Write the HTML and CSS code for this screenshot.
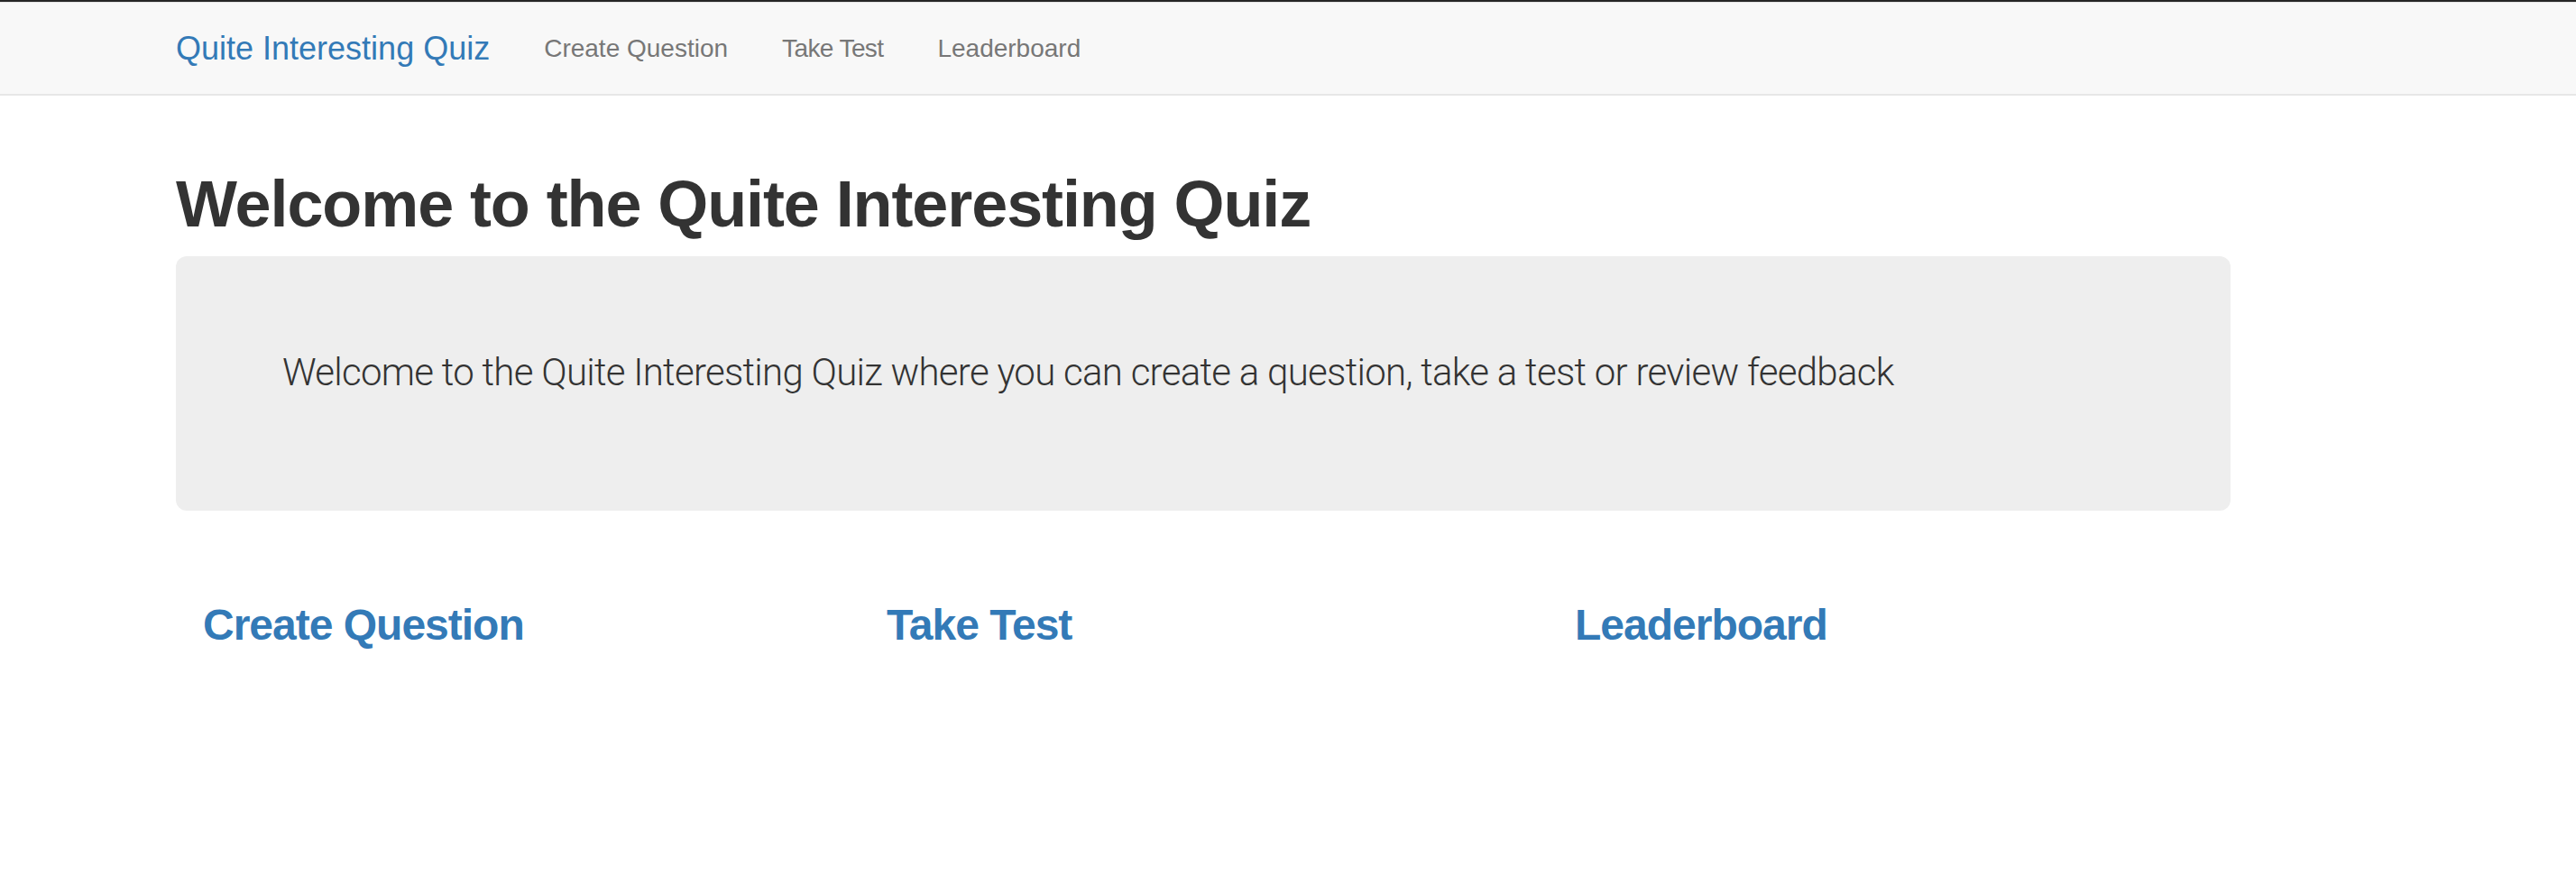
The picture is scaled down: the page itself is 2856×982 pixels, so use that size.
FILE: index.html
```html
<!DOCTYPE html>
<html lang="en">
<head>
<meta charset="utf-8">
<title>Quite Interesting Quiz</title>
<link rel="stylesheet" href="styles.css">
</head>
<body>
<div class="topline"></div>
<nav class="navbar">
  <div class="container nav-inner">
    <a class="brand" href="#">Quite Interesting Quiz</a>
    <ul class="nav-links">
      <li><a href="#">Create Question</a></li>
      <li><a href="#">Take Test</a></li>
      <li><a href="#">Leaderboard</a></li>
    </ul>
  </div>
</nav>
<main class="container">
  <h1 class="title">Welcome to the Quite Interesting Quiz</h1>
  <section class="jumbotron">
    <p class="lead">Welcome to the Quite Interesting Quiz where you can create a question, take a test or review feedback</p>
  </section>
  <div class="cards">
    <div class="card"><h3><a href="#">Create Question</a></h3></div>
    <div class="card"><h3><a href="#">Take Test</a></h3></div>
    <div class="card"><h3><a href="#">Leaderboard</a></h3></div>
  </div>
</main>
</body>
</html>
```

FILE: styles.css
```css
html, body {
  margin: 0;
  padding: 0;
  background: #fff;
}
body {
  font-family: "Liberation Sans", Arial, sans-serif;
  color: #333;
}
a {
  text-decoration: none;
}
.topline {
  height: 2px;
  background: #262626;
}
.navbar {
  background: #f8f8f8;
  border-top: 1px solid #e2e2e2;
  border-bottom: 2px solid #e7e7e7;
  box-sizing: border-box;
  height: 104px;
}
.container {
  width: 2278px;
  margin-left: 195px;
}
.nav-inner {
  display: flex;
  align-items: flex-start;
  height: 100%;
}
.brand {
  color: #337ab7;
  font-size: 36px;
  line-height: 40px;
  padding: 31px 30px 0 0;
}
.nav-links {
  display: flex;
  list-style: none;
  margin: 0;
  padding: 0;
}
.nav-links a {
  display: block;
  color: #777;
  font-size: 28px;
  line-height: 40px;
  padding: 31px 30px 0 30px;
}
.nav-links li:nth-child(2) a {
  letter-spacing: -0.6px;
}
.title {
  font-size: 72px;
  line-height: 79px;
  font-weight: bold;
  letter-spacing: -1.1px;
  margin: 81px 0 18px 0;
  color: #333;
}
.jumbotron {
  background: #eee;
  border-radius: 12px;
  padding: 99px 118px 93px 118px;
  margin-bottom: 60px;
}
.lead {
  margin: 0 0 30px 0;
  font-family: Roboto, "Liberation Sans", sans-serif;
  font-weight: 300;
  font-size: 42px;
  line-height: 60px;
  letter-spacing: -0.72px;
  color: #333;
}
.cards {
  display: grid;
  grid-template-columns: 758px 763px 1fr;
  padding-left: 30px;
}
.card h3 {
  margin: 40px 0 0 0;
  font-size: 48px;
  line-height: 53px;
  font-weight: bold;
  letter-spacing: -1px;
}
.card h3 a {
  color: #337ab7;
}
```
